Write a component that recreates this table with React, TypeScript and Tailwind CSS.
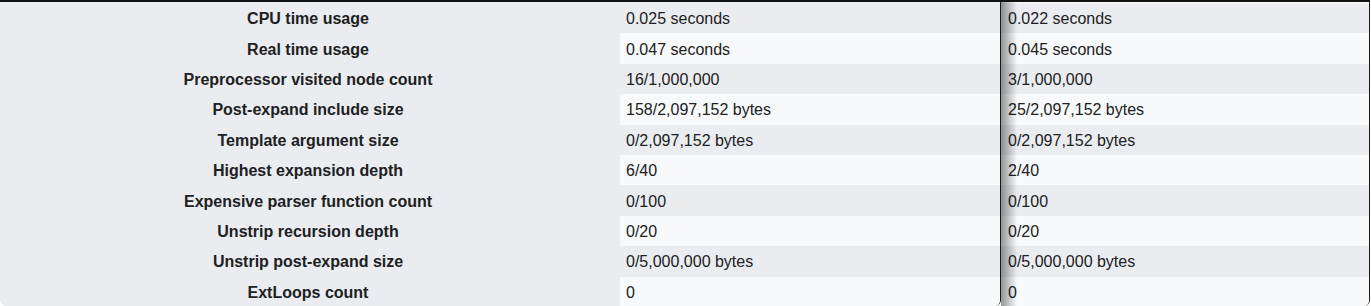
const rows: [string, string, string][] = [
  ["CPU time usage", "0.025 seconds", "0.022 seconds"],
  ["Real time usage", "0.047 seconds", "0.045 seconds"],
  ["Preprocessor visited node count", "16/1,000,000", "3/1,000,000"],
  ["Post-expand include size", "158/2,097,152 bytes", "25/2,097,152 bytes"],
  ["Template argument size", "0/2,097,152 bytes", "0/2,097,152 bytes"],
  ["Highest expansion depth", "6/40", "2/40"],
  ["Expensive parser function count", "0/100", "0/100"],
  ["Unstrip recursion depth", "0/20", "0/20"],
  ["Unstrip post-expand size", "0/5,000,000 bytes", "0/5,000,000 bytes"],
  ["ExtLoops count", "0", "0"],
];

export default function App() {
  return (
    <div
      className="flex h-[306px] w-[1370px] overflow-hidden border-t-2 border-[#111] bg-white text-[16px] text-[#202122]"
      style={{ fontFamily: '"Liberation Sans", Arial, sans-serif' }}
    >
      {/* old revision */}
      <div className="w-[1001px] flex-none overflow-hidden rounded-b-[6px] border-r border-[#1a1a1a] bg-[#eaecf0] pt-px">
        {rows.map(([label, value], i) => (
          <div key={label} className="grid h-[30.4px] grid-cols-[620px_1fr] items-center">
            <div className="pr-[4px] pt-[2px] text-center font-bold">{label}</div>
            <div
              className={`flex h-full items-center pl-[6px] pt-[2px] ${i % 2 === 0 ? "bg-[#eaecf0]" : "bg-[#f8f9fa]"}`}
            >
              {value}
            </div>
          </div>
        ))}
      </div>

      {/* new revision */}
      <div className="relative flex-1 overflow-hidden rounded-br-[6px] border-r border-[#1a1a1a] pt-px">
        {rows.map(([label, , value], i) => (
          <div
            key={label}
            className={`flex h-[30.4px] items-center pl-[7px] pt-[2px] ${i % 2 === 0 ? "bg-[#eaecf0]" : "bg-[#f8f9fa]"}`}
          >
            {value}
          </div>
        ))}
        <div className="pointer-events-none absolute inset-y-0 left-0 w-[16px] bg-gradient-to-r from-black/40 to-transparent" />
      </div>
    </div>
  );
}
